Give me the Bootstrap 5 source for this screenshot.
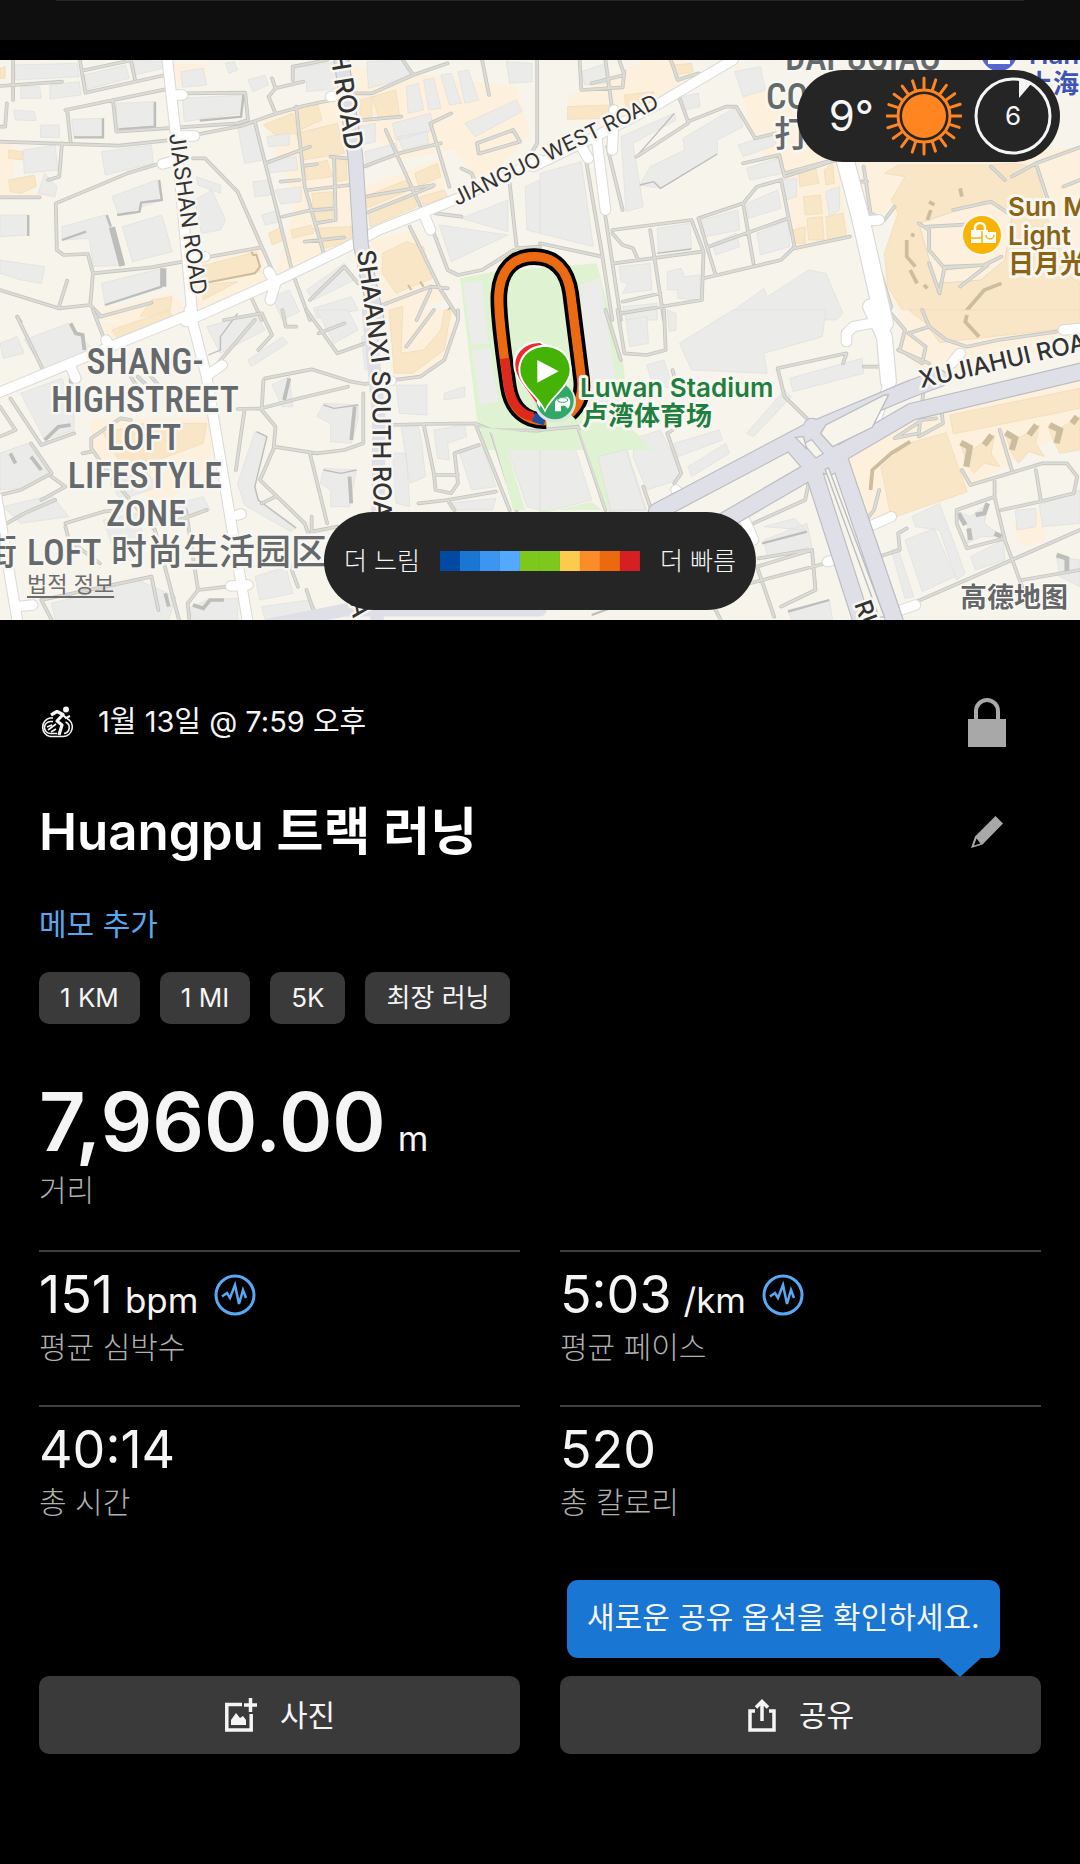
<!DOCTYPE html>
<html lang="ko" data-bs-theme="dark">
<head>
<meta charset="utf-8">
<meta name="viewport" content="width=device-width, initial-scale=1">
<title>Huangpu 트랙 러닝</title>
<link rel="stylesheet" href="https://cdn.jsdelivr.net/npm/bootstrap@5.3.0/dist/css/bootstrap.min.css">
<style>
body{background:#000;color:#f5f5f5;font-family:Inter,"Noto Sans CJK KR",sans-serif;font-size:29px;line-height:40px}
.topbar{height:40px;background:#0f0f0f}
.topbar::before{content:"";display:block;height:1px;margin:0 56px;background:#262626}
.mapbox{margin-top:20px;height:560px}
.mapbox>svg{width:100%;height:100%}
.pill{position:absolute;background:#252525;color:#f5f5f5;border-radius:50px}
.weather{top:10px;right:20px;height:92px;padding:0 8px 0 32px;gap:12px;font-size:42px}
.legend{bottom:10px;left:50%;transform:translateX(-50%);height:98px;padding:0 20px;gap:20px;font-size:25px;white-space:nowrap;font-weight:300}
.scale-bar i{width:20px;height:20px}
.legal{position:absolute;left:27px;bottom:20px;font-size:22px;line-height:32px;color:#6c6c6c;text-decoration:underline;text-underline-offset:4px}
.content{padding:74px 39px 0}
.line-date{height:56px}
.line-title{height:64px;margin-top:50px}
.line-title h1{font-size:51px;font-weight:600;line-height:64px}
.icon-btn{width:70px;height:56px;margin-right:19px;color:#a8a8a8}
.memo{display:inline-block;margin-top:40px;color:#58a8f0;text-decoration:none;font-size:30px}
.chips{margin-top:27px;gap:20px}
.chip{height:52px;padding:0 21px;border:0;border-radius:10px;background:#3a3a3a;color:#f5f5f5;font-size:26px;line-height:50px}
.distance{margin-top:50px;height:96px;font-size:81px;font-weight:600;line-height:96px}
.unit{margin-left:12px;font-size:35px;font-weight:400}
.caption{color:#b0b0b0;font-size:30px;font-weight:300;line-height:40px}
.stats{--bs-gutter-x:40px;margin-top:40px}
.stat{height:155px;border-top:2px solid #404040;padding-top:11px}
.value{height:64px;font-size:52px;line-height:64px}
.pulse{color:#58a8f4;margin-left:16px}
.actions{--bs-gutter-x:40px;margin-top:116px;padding-bottom:110px}
.action{height:78px;border:0;border-radius:10px;background:#3a3a3a;color:#f5f5f5;font-size:30px;gap:22px}
.hint{position:absolute;left:27px;bottom:96px;height:78px;padding:0 20px;border-radius:11px;background:#1976d2;color:#f5f5f5;font-size:30px;line-height:74px;white-space:nowrap}
.hint::after{content:"";position:absolute;right:19px;top:100%;border:21px solid transparent;border-top:19px solid #1976d2;border-bottom:0}
/* map */
.bld{fill:#ebebea;stroke:#dededc;stroke-width:2}
.shd{fill:none;stroke:#bdbdbb;stroke-width:7}
.sand{fill:#fdf1de}.tan{fill:#f9e6c7;stroke:#eddab8;stroke-width:2}.park{fill:#dff3d2}
.tshd{fill:none;stroke:#cdbd9f;stroke-width:11}
.lc,.li,.wc,.wi,.ac,.ai{fill:none;stroke-linejoin:round;stroke-linecap:round}
.lc{stroke:#c6c6c1;stroke-width:11}.li{stroke:#dcdbd5;stroke-width:6}
.wc{stroke:#dadad8;stroke-width:34}.wi{stroke:#fff;stroke-width:28}
.ac{stroke:#bcbdc2;stroke-width:46}.ai{stroke:#dfe0e7;stroke-width:39}
.street{fill:#333;font-family:Inter,sans-serif;stroke:#f8f6f1;stroke-width:5px;paint-order:stroke;stroke-linejoin:round}
.zone{fill:#65696b;font-family:"Roboto Condensed","Liberation Sans Narrow",Roboto,"Noto Sans CJK SC",sans-serif;font-weight:500;font-size:36px;stroke:#f8f6f1;stroke-width:5px;paint-order:stroke;stroke-linejoin:round}
.poi{font-family:Inter,"Noto Sans CJK SC",sans-serif;font-weight:600;font-size:26px;stroke:#f8f6f1;stroke-width:6px;paint-order:stroke;stroke-linejoin:round}
</style>
</head>
<body>
<header class="topbar"></header>
<section class="mapbox position-relative overflow-hidden">
<svg viewBox="0 60 1080 560" preserveAspectRatio="xMidYMid slice" role="img" aria-label="Luwan Stadium">
<defs>
<path id="a-lane" d="M38 180V300M0 258L180 245M232 180L248 278L480 225M238 212L375 182M380 180L392 238M0 425L345 437L480 422L700 378L790 345L880 318L1000 292M190 330L480 268M195 330L205 425M328 300L338 395L480 385L690 370L720 360L712 278L540 280M20 310L15 380L0 380M180 430L172 530L140 540M0 592H115M460 492L370 520L162 610L165 750L185 765L255 762L270 820L262 915L295 950M0 870L170 925L262 915M170 925L195 842M270 820L440 802L760 742M560 475L595 475L690 575L790 810M740 365L850 820L900 960M860 320L885 560L940 760M770 490L900 440M780 290L800 340M780 290L800 265L880 245M850 240L850 200L950 180M800 265L790 235M815 545L870 540M820 650L895 632L975 625M885 497L920 492M895 570L1015 555M970 470L975 660L915 670M960 470L1010 475M885 725L1000 712M1170 180L1200 225L1300 190M1030 280H1080L1200 225M1000 365L1165 350M1060 590L1260 555M1060 640L1255 560M1055 500L1160 460L1280 430M1120 390L1230 640M1250 370L1305 560M1250 370L1310 340M1400 180L1420 285M1390 460L1385 430L1490 390L1510 425L1395 460M1560 180V430L1530 480M1340 505L1370 520L1380 550M1480 550L1500 740M1260 700L1300 810L1330 825L1400 810L1500 745L1568 740M1190 680L1280 870L1330 950M1110 915L1250 860L1300 865M1250 870L1210 960M900 900L1000 800L1040 850M290 950L440 908M50 950L60 965M720 870L760 960M1265 640L1340 650"/>
<path id="a-white" d="M485 170L510 400L560 960M510 285H530M510 408H565M515 480L472 492M545 770H595M780 815L800 850L785 900M1230 640L1250 690M960 290L990 285M540 965L800 845L1000 745L1100 690L1330 595L1568 480"/>
<path id="a-art" d="M990 170L1032 470L1048 735L1095 965"/>
<path id="b-lane" d="M115 180L120 270L240 262L245 215M190 180L210 330M230 180L245 225L150 250M380 180L400 240L460 220M400 280L430 365L540 320L570 320L625 415L685 400M430 370L280 470M590 490L695 465L710 530L860 480M710 520L850 480M130 460L180 760L210 960M195 440L240 630M190 650L235 960M210 690L440 660L475 755L470 900L235 940M320 690L360 960M215 790L470 755M210 700L240 735L270 745L285 780M460 655L590 610L630 560L700 540L740 745L900 710M460 655L510 825M590 610L620 790M490 740L720 655M475 835L700 780L740 740M0 730L180 770M240 905L350 880M940 500L960 640L1000 660M1000 660L1030 620M925 545H950M1370 530L1440 490L1600 430M1440 490L1475 600M1100 670L1130 690L1130 750L1175 805L1290 795L1340 770M1125 680L1300 670M1200 630L1310 605L1360 640M1175 800L1160 880L1130 790M1180 800L1300 795L1220 860M990 820L1020 920L1000 960M1350 540L1310 500M1520 560L1568 540"/>
<path id="b-white" d="M-20 500L150 415L330 320L560 180M165 420L190 630M215 330L210 450M120 440L140 475M955 662L985 660"/>
<path id="b-wide" d="M860 380L930 650L1000 970"/>
<path id="c-lane" d="M50 20L125 180M270 0L300 80M30 265L120 405L215 370M0 290L45 360L0 380M265 385L350 325L380 330M265 385L265 415L330 510L450 660L520 930M265 425L240 430M20 640L70 610L160 570M90 400L150 490L60 540L0 555M380 200L395 225M400 200L430 230M430 190L460 225M650 30L760 10L790 75L750 120M600 200L740 30M820 0L830 50H860M890 0L980 130L1060 100M925 70L1000 40M770 205L905 178L1020 215L1060 222L1125 212M765 210L760 300L800 350L795 410L920 430L1000 420L1055 400V250M690 297L760 295L870 265L1010 230M710 300L685 480M795 415L755 510L885 640L895 670M900 430L950 640M760 580L800 560M905 620V665L980 650M1130 345L1230 342L1380 340L1425 360L1568 362M1230 342L1260 490L1265 540L1310 550L1330 520L1320 430L1390 405M1260 495H1330M1380 340L1480 600M1425 360L1500 600M1215 580L1300 570L1440 545M1300 570L1320 600M1330 0V30L1290 150L1220 200L1130 212M120 870L440 800L460 900M120 870L150 930M190 640L300 605L350 600M190 650L200 690L290 760M540 600L575 840L660 830M575 840L545 880L550 930M600 600L520 630M840 760L865 830M890 840L910 900M150 500L190 530L120 570M1180 110L1260 0"/>
<path id="c-white" d="M-20 255L180 170L320 110L560 10M205 170L220 205M308 90L320 110M550 0L600 200L720 940M610 190L645 165M690 615L700 612M670 828L720 825M-10 560L50 930M50 890L95 885M1110 215L1135 212"/>
<path id="d-lane" d="M225 0L245 130L310 135L365 120L360 0M190 0L235 150M0 360L110 350M110 350L190 600M385 180L390 200M690 175L890 130L880 160M690 175L710 260L775 325M370 370L410 490L390 520M370 370L385 360M300 530L320 590M780 520L770 570L620 640M630 770L790 720L800 840L700 890M635 745L780 720M610 820L830 760M630 770L680 920M500 880L525 930M1010 0L1060 60L1045 120L1110 160L1120 110L1070 70L1130 50L1180 90L1240 110L1330 90L1500 65M940 170H1000M1110 0L1130 50M1040 120L1130 160M1115 230L1100 370L1030 385M1030 385L1110 330L1150 325M1165 290L1170 340L1100 380M1335 360L1370 480M1225 480L1250 525L1460 460L1530 460L1560 500L1550 550L1450 575L1340 600M1320 510V560L1350 690L1400 830M1320 560L1210 600L1210 640L1240 715L1350 685M1440 480L1455 575M985 540L970 600L940 640M1065 655L1040 670L1045 720L970 745M1568 660L1370 750L1060 890M1400 810L1568 780"/>
<path id="d-white" d="M890 95L890 70L910 50L960 40M1195 160L1220 130M395 540L400 545M590 620L620 690M835 755L870 745M945 655L1020 620M1020 910L1090 885M1520 60L1568 55M1010 230L960 370"/>
<path id="d-wide" d="M960 -10L1000 80L1012 215"/>
<path id="d-art" d="M340 605L780 365L1080 235M540 630L790 480L1080 305L1590 180M1080 235L1160 205M740 410L790 470L930 920M790 350L870 450L1030 935M840 470L850 440"/>
<path id="shaanxi" d="M357 251L372 365L374 560"/>
</defs>
<rect y="0" width="1080" height="640" fill="#f7f4ec"/>
<g transform="scale(.34436 .33333)">
<path class="sand" d="M0 430H40V560L160 590H0zM760 360L990 290L1160 260L1170 360L1050 380L1020 740L800 820L860 600zM1060 560L1290 470L1290 590L1080 690zM1080 720L1210 690L1290 900L1110 960H1060zM520 800L760 745L770 840L560 940zM300 930L500 880L560 960H300zM500 190H600V260H520zM900 180L1500 260L1540 400L1400 560L1320 450L1150 480z"/>
<path class="tan" d="M765 375L850 340L870 400L800 405zM862 328L920 305L935 360L870 390zM860 400L980 370L1000 460L880 480zM885 500L950 480L965 530L890 540zM1080 290L1150 270L1160 350L1100 355zM1045 300L1080 290V355H1045zM1060 590L1180 540L1190 570L1065 625zM1070 640L1200 590L1210 620L1075 680zM1205 520L1270 490L1280 530L1215 560zM1110 760L1180 725L1230 740L1255 835L1150 880L1110 820zM580 800L745 755L755 815L590 850zM905 580L965 575V620L910 625zM910 640L965 630V660L915 665zM780 700L820 680L825 720L790 735zM845 690L905 675L910 700L850 715zM0 205L15 200V235H0zM25 450L65 455V480L25 475zM25 540L100 525L105 560L60 580L30 575zM910 685L1020 680V720L945 745zM975 480L1005 478L1008 540L980 545zM1130 940L1165 920V960H1130zM1220 590L1290 570L1300 590L1230 615zM585 855L690 845L590 900zM440 900L500 890L490 950L400 960z"/>
<path class="bld" d="M42 195L225 190L230 230L45 240zM245 225L365 195L375 235L255 268zM60 260H115L120 295H60zM145 255L230 245L235 285L145 297zM390 180L475 185V205L390 225zM525 215L590 205L600 255L530 262zM530 295L705 285L700 340L535 365zM338 310L445 305L447 380L340 385zM208 358L300 355V410L215 412zM40 330L100 335L105 362L45 360zM118 375H172V412H118zM68 450L160 435L168 510L70 520zM295 455L440 435L445 490L305 525zM325 590L455 540L470 600L345 645zM180 680L305 645L360 795L270 800L260 715L180 720zM355 680L470 645L500 755L385 785zM565 600L615 570L655 660L640 690L585 700zM0 645L80 645V705L0 710zM0 780L130 800L120 850L60 840L0 820zM295 850L470 805L475 860L305 915zM690 380L740 370L765 480L710 490zM775 410L840 400V435L780 440zM780 480L860 470L865 510L785 518zM735 545L785 540V585L740 590zM800 570L875 560V605L815 612zM760 645L810 630L815 665L770 675zM850 205L980 185L990 265L890 275V245H850zM1065 185L1170 180L1190 230L1070 265zM1180 260L1215 250L1230 330L1185 340zM1230 240L1260 235L1280 325L1245 330zM1280 225L1310 220L1340 310L1305 315zM1330 215L1360 210L1390 300L1350 310zM1470 185L1545 190V245L1480 250zM1350 370L1500 300L1515 335L1380 410zM1140 370L1250 340L1260 390L1150 420zM1060 455L1150 430L1155 455L1065 505zM1040 380L1090 370V425L1050 435zM1155 410L1240 395L1245 430L1170 450zM1340 655L1475 600V695zM1275 675L1475 705L1310 785zM1525 560L1568 540V700L1530 690zM890 870L1000 790L1030 840L910 900zM910 925L1020 890L1040 930L920 955zM790 890L840 870L870 935L820 960zM655 190L680 185L690 210L665 220zM720 240L770 225L780 255L735 275zM570 530L640 555V580L575 555zM130 520L165 560L160 590L110 580z"/>
<path class="shd" d="M450 305V380L345 388M299 355V412H215M707 285L700 350L580 362M462 540L470 600L410 608L405 635L340 645M310 645L322 680M82 645V708M180 720L250 695M305 915L470 860"/><path class="shd" style="stroke-width:18" d="M325 682L355 798M474 805V860"/>
<path class="tshd" style="stroke-width:6" d="M730 755L735 765H745L755 800L740 820L580 852M1185 855L1195 870M1220 845L1230 860M1290 880L1310 920L1285 950"/>
</g>
<g transform="translate(540) scale(.34436 .33333)">
<path class="sand" d="M80 290L300 180H420L460 240L280 350H80zM560 180L720 320L860 480L700 540L620 420zM720 520L860 480L900 710L740 760zM930 490L1568 440V960H1050L1000 840L1030 640L945 640z"/>
<path class="tan" d="M80 320L205 315V355L80 358zM245 285L330 275V320L250 325zM750 515L800 500L810 550L755 560zM765 590L815 585L820 640L770 645zM775 655L820 650L825 720L780 720zM735 690L770 680V730H740zM830 650L880 640L890 710L835 720zM825 510L850 490L855 550L830 555zM1000 520L1060 530L1020 600L1040 640L1000 760L1010 860L1070 960H1568V850L1480 680L1440 500L1370 490L1300 495L1040 495zM390 195L440 190L445 215L395 225z"/>
<path class="sand" d="M1100 670L1300 600L1370 650L1350 780L1280 840L1150 850L1125 760z" stroke="#e0d2b8" stroke-width="2"/>
<path class="bld" d="M0 520L120 485L155 740L0 700zM235 410L390 340L395 360L270 430L300 620L250 635zM290 555L320 500L420 450L415 415L570 320L590 380L515 420V460L350 565zM575 435L680 400L685 435L590 470zM600 505L690 475L705 520L610 540zM565 215L640 200L655 270L590 290zM410 290L460 280L465 320L420 330zM120 215L190 190L195 250L130 255zM470 660L575 630L580 690L480 710zM500 730L570 700L580 740L510 765zM600 610L690 570L700 625L605 655zM630 700L720 660L725 740L640 765zM340 685L435 670L440 745L345 758zM230 800L320 790L325 870L240 880L255 850L235 845zM370 815L410 805L420 830L465 825V900L400 895V870H370zM525 960L650 865L660 890L780 810L830 820L880 940L860 960zM110 860L160 840L210 960H120zM700 540L745 535V590L715 600zM830 575L870 560V630L840 650zM240 920L340 910V960H250z"/>
<path class="tshd" d="M1220 565L1225 590M1130 605L1145 615M1125 660L1135 630M1085 700L1080 710M1065 720V770L1090 800M1075 810L1095 850M1115 855L1125 865M1340 850L1290 870L1240 930L1230 960"/>
<path class="shd" style="stroke-width:4" d="M290 555L330 545L350 565L515 462M280 470L390 340M340 760L440 747"/>
</g>
<g transform="translate(0 310) scale(.34436 .33333)">
<path class="sand" d="M295 40L550 0L540 20L330 110zM260 330L640 320L600 480L480 580L430 560L280 470zM1110 0H1320L1300 150L1210 200H1140zM370 600L430 590L450 660z"/>
<path class="tan" d="M325 60L490 0L500 20L350 100zM1130 0L1170 -10L1165 130L1230 120L1280 60L1290 0H1310L1290 120L1200 190H1145zM300 370L420 340L600 340L590 400L460 450L350 460z"/>
<path class="bld" d="M70 90L200 40L270 120L240 150L130 180zM0 100L50 80L70 130L10 145zM60 250L180 205L215 300V360L130 390zM0 430L80 400L145 490L60 535L0 540zM10 590L150 555L200 620L60 640zM600 50L740 10L770 60L640 130zM720 150L820 80L835 100L730 170zM920 0L1010 0L1040 60L970 100zM1050 80L1100 50V160L1060 180zM790 225L840 200L850 290L820 290zM940 280L1040 285V330L1020 400L960 395V340L920 320zM740 365L775 380L740 530L750 570L860 650L845 665L710 585L690 520zM940 475L1035 480L1015 590L960 590V540L930 520zM1150 225H1240V315L1160 310zM1165 350H1215L1225 400L1235 500L1190 520zM1140 430L1180 430L1190 590L1150 580zM1260 360L1350 345L1355 380L1300 400L1305 450L1270 445zM1335 430L1400 405L1440 530L1370 540zM1470 405L1568 370V600L1530 590zM320 520L420 480L460 530L350 570zM480 590L590 560L610 600L500 640zM300 630L400 610L420 700L330 720zM150 880L400 810L510 860L490 930H160zM740 800L830 770L850 850L755 870zM550 895L600 870L690 865V930H560zM410 590L450 580L480 640L430 650zM270 470L320 460L360 490L330 510zM1290 250L1350 230V260L1290 270zM1300 580L1440 565L1430 600H1310zM760 890L900 870L940 930H770z"/>
<path class="shd" style="stroke-width:11" d="M205 40L220 70L240 75L245 120M205 205L210 310M130 390L170 350L205 345M840 205L825 270M1030 290L1020 390M1015 500L1020 580M30 430L45 460M90 440L120 480M480 850L490 890M560 885L590 895L610 870H650"/>
<path class="shd" style="stroke-width:4" d="M690 10L640 80L640 120L605 135M745 365L775 380L740 530L750 570L860 655M940 285L970 295L1040 285M940 480L990 490L1035 480"/>
</g>
<g transform="translate(540 310) scale(.34436 .33333)">
<path class="sand" d="M1040 0H1568V90L1130 220L1050 120zM880 445L1080 330L1568 200V350L1400 440L1250 530L1240 550L1010 630L930 640zM1370 640L1450 600L1470 690L1400 710z"/>
<path class="tan" d="M1070 0H1568V50L1160 98L1120 40zM1190 315L1568 235V295L1200 372zM990 470L1070 400L1180 368L1240 545L1020 625zM1220 400L1260 415L1320 375L1310 430L1335 470L1290 460L1260 490L1240 460zM1350 370L1390 385L1450 345L1440 400L1465 440L1420 425L1390 460L1370 430zM1475 345L1510 355L1568 320V420L1510 430L1490 390z"/>
<path class="bld" d="M250 30L310 20L315 100L260 110zM370 0L395 10V60L375 65zM405 100L560 0H830L820 80L650 130L660 190L440 180zM725 205L935 145L940 190L735 245zM600 370L710 240L730 260L620 380zM310 165L360 150L385 230L330 235zM275 385L350 360L410 490L400 510L310 540L270 440zM0 370L85 360L150 570L0 610zM165 440L250 415L310 600L200 605zM430 470L540 400L550 430L440 500zM650 690L775 640L790 710L660 740zM720 900L840 870L850 930H730zM1060 690L1145 655L1205 800L1110 845zM1080 620L1160 580L1235 790L1210 810L1160 660L1090 650zM1215 605L1250 620L1300 580L1290 640L1345 680L1280 680L1240 700L1245 655zM1380 600L1440 595V650L1385 660zM1450 585L1568 540V640L1460 650zM1250 740L1345 690L1350 750L1265 780zM1500 740L1568 750V830L1510 800zM1020 720L1040 715L1085 860L1060 865zM390 400L520 360L530 390L400 440zM650 650L740 625L770 660z"/>
<path class="tshd" d="M1240 15L1235 35L1275 80M960 540L965 480L1020 430L1075 395"/><path class="tshd" style="stroke-width:18" d="M1222 398L1248 412L1238 470M1312 375L1290 405M1352 368L1380 385L1370 420M1442 345L1420 375M1480 345L1510 360L1500 400M1560 320L1545 340"/>
<path class="shd" d="M645 700L775 665M720 905L840 870M150 915L230 885"/><path class="shd" style="stroke-width:14" d="M1215 610L1235 645M1300 580L1290 610L1265 615M1245 655L1250 690M1500 735L1530 745V790M1320 670L1340 680"/>
</g>
<g transform="translate(440 230) scale(.33333)">
<path class="park" d="M60 145L160 125L470 100L550 400L570 590L640 660H130L110 560z"/>
<path fill="#ecedea" d="M70 160L125 150L145 340L95 345zM95 360L150 355L175 515L120 525zM420 165L480 145L545 560L440 570z"/>
</g>
<g transform="scale(.34436 .33333)"><use href="#a-lane" class="lc"/><use href="#a-lane" class="li"/></g>
<g transform="translate(540) scale(.34436 .33333)"><use href="#b-lane" class="lc"/><use href="#b-lane" class="li"/></g>
<g transform="translate(0 310) scale(.34436 .33333)"><use href="#c-lane" class="lc"/><use href="#c-lane" class="li"/><path class="park" d="M1385 350L1568 372V385L1470 410L1525 600H1490L1430 370z"/></g>
<g transform="translate(540 310) scale(.34436 .33333)"><use href="#d-lane" class="lc"/><use href="#d-lane" class="li"/><path class="park" d="M115 360L250 400L300 600H195zM0 612L150 575L180 600H0z"/><path class="bld" d="M168 440L250 418L305 600H205z"/></g>
<g transform="scale(.34436 .33333)"><use href="#a-white" class="wc"/></g>
<g transform="translate(540) scale(.34436 .33333)"><use href="#b-white" class="wc"/><use href="#b-wide" class="wc" style="stroke-width:56"/></g>
<g transform="translate(0 310) scale(.34436 .33333)"><use href="#c-white" class="wc"/></g>
<g transform="translate(540 310) scale(.34436 .33333)"><use href="#d-white" class="wc"/><use href="#d-wide" class="wc" style="stroke-width:50"/></g>
<g transform="scale(.34436 .33333)"><use href="#a-white" class="wi"/><use href="#a-art" class="ac"/><use href="#a-art" class="ai" style="stroke-width:40"/></g>
<g transform="translate(540) scale(.34436 .33333)"><use href="#b-white" class="wi"/><use href="#b-wide" class="wi" style="stroke-width:49"/></g>
<g transform="translate(0 310) scale(.34436 .33333)"><use href="#c-white" class="wi"/><path class="ai" d="M1070 0L1100 320L1095 930"/><path class="ai" d="M780 945L1000 900L1568 900"/></g>
<g transform="translate(540 310) scale(.34436 .33333)"><use href="#d-white" class="wi"/><use href="#d-wide" class="wi" style="stroke-width:43"/><use href="#d-art" class="ac" style="stroke-width:54"/><use href="#d-art" class="ai" style="stroke-width:47"/><path fill="#f7f4ec" stroke="#bcbdc2" stroke-width="4" d="M742 382L765 380L775 418zM828 478L838 474L1000 920L985 922zM815 370L830 345L1000 255H1012L965 352L850 410z"/></g>
<g class="street">
<text font-size="26" font-weight="500" transform="translate(330 53) rotate(81)">H ROAD</text>
<text font-size="25" font-weight="500"><textPath href="#shaanxi">SHAANXI SOUTH ROAD</textPath></text>
<text font-size="22" transform="translate(169 134) rotate(82)">JIASHAN ROAD</text>
<text font-size="21" transform="translate(457 206) rotate(-26)">JIANGUO WEST ROAD</text>
<text font-size="24" font-weight="500" transform="translate(921 388) rotate(-13)">XUJIAHUI ROAD</text>
<text font-size="24" font-weight="500" transform="translate(854 604) rotate(70)">RU</text>
<text font-size="24" font-weight="500" transform="translate(350 602) rotate(80)">A</text>
</g>
<g class="zone" text-anchor="middle">
<text x="145" y="374">SHANG-</text><text x="145" y="412">HIGHSTREET</text><text x="144" y="450">LOFT</text><text x="145" y="488">LIFESTYLE</text><text x="146" y="526">ZONE</text>
<g text-anchor="start"><text x="-19" y="565">街</text><text x="27" y="565">LOFT</text><text x="111" y="565">时尚生活园区</text></g>
<text x="863" y="70">DAPUQIAO</text><text x="766" y="109" text-anchor="start">CO</text><text x="774" y="147" text-anchor="start">打</text>
</g>
<g class="poi">
<circle cx="999" cy="53" r="18" fill="#5566cc" stroke="none"/><path d="M988 60h22v4h-22zM991 50h3v9h-3zM998 50h3v9h-3zM1005 50h3v9h-3z" fill="#fff" stroke="none"/>
<g fill="#3f55b5"><text x="1029" y="64">Han</text><text x="1027" y="93">上海田</text></g>
<circle cx="982" cy="235" r="21" fill="#faf7f2" stroke="none"/><circle cx="982" cy="235" r="19" fill="#f8b400" stroke="none"/>
<g stroke="none"><path d="M971 230h17v13h-17zM983 232h13v11h-13z" fill="#fff"/><path d="M975 230v-2a5 5 0 0 1 10 0v2" fill="none" stroke="#fff" stroke-width="2.4"/><path d="M971 238h11M982 231v12M986 235a4 4 0 0 0 8 0" fill="none" stroke="#f8b400" stroke-width="1.5"/></g>
<g fill="#8a6412"><text x="1008" y="216">Sun M</text><text x="1008" y="245">Light</text><text x="1008" y="273">日月光</text></g>
</g>
<!-- recorded route -->
<g transform="translate(440 230) scale(.33333)" fill="none">
<path d="M318 572C260 575 215 540 205 470C195 400 172 250 177 190C182 120 220 80 282 80C345 80 382 120 392 190C398 240 415 370 425 450C430 500 412 530 390 550" stroke="#000" stroke-width="50"/>
<path d="M318 572C260 575 215 540 205 470C195 400 172 250 177 190C182 120 220 80 282 80C345 80 382 120 392 190C398 240 415 370 425 450C430 500 412 530 390 550" stroke="#ec6b12" stroke-width="28"/>
<path d="M280 560C240 555 215 520 205 470L194 385" stroke="#dd2a1c" stroke-width="28"/><path d="M280 562L315 572" stroke="#1f4f9f" stroke-width="28"/>
<circle cx="345" cy="515" r="63" fill="#dfe5e3"/><circle cx="345" cy="512" r="56" fill="#32a866"/>
<path d="M345 520q0-20 38-20q14 12 4 32l-4 4q-8-14-20-8v16h-18z" fill="#fff"/><ellipse cx="368" cy="510" rx="15" ry="7" stroke="#32a866" stroke-width="3"/>
<path d="M300 534C275 490 220 450 220 405C220 360 250 335 300 333L330 350z" fill="#fff"/>
<path d="M290 520C265 480 226 445 226 405C226 368 255 340 300 339L315 350z" fill="#f0282f"/>
<path d="M315 548C295 500 235 470 235 420C235 375 270 344 315 344C360 344 395 375 395 420C395 470 335 500 315 548z" fill="#fff"/>
<path d="M315 539C300 500 241 465 241 420C241 380 273 351 315 351C357 351 389 380 389 420C389 465 330 500 315 539z" fill="#45b305"/>
<path d="M292 390L356 424L292 458z" fill="#fff"/>
</g>
<g class="poi" fill="#1f7f3f"><text x="580" y="397">Luwan Stadium</text><text x="582" y="425">卢湾体育场</text></g>
<text x="960" y="607" font-family="Noto Sans CJK SC,sans-serif" font-weight="700" font-size="27" fill="#666" stroke="#fff" stroke-width="2" paint-order="stroke">高德地图</text>
</svg>
<div class="pill weather d-flex align-items-center">
<span>9°</span>
<svg width="76" height="80" viewBox="-38 -40 76 80" fill="none" stroke="#ff8520" stroke-width="3" stroke-linecap="round"><circle r="22" fill="#ff8520" stroke="none"/><circle r="26"/><path id="ray" d="M0-27V-38M0 27V38M-27 0H-37M27 0H37"/><use href="#ray" transform="rotate(18)"/><use href="#ray" transform="rotate(36)"/><use href="#ray" transform="rotate(54)"/><use href="#ray" transform="rotate(72)"/></svg>
<svg width="78" height="80" viewBox="-39 -40 78 80"><circle r="37" fill="none" stroke="#f5f5f5" stroke-width="3"/><path d="M6-37L18-32L6-18z" fill="#f5f5f5"/><text y="9" text-anchor="middle" font-size="26" fill="#f5f5f5">6</text></svg>
</div>
<div class="pill legend d-flex align-items-center">
<span>더 느림</span>
<span class="scale-bar d-flex"><i style="background:#004aa3"></i><i style="background:#1976d2"></i><i style="background:#3d95f2"></i><i style="background:#54a8ff"></i><i style="background:#7ec81d"></i><i style="background:#7ec81d"></i><i style="background:#ffcb4f"></i><i style="background:#fc8c28"></i><i style="background:#ec6a0e"></i><i style="background:#d61f22"></i></span>
<span>더 빠름</span>
</div>
<a class="legal" href="#">법적 정보</a>
</section>
<main class="content">
<div class="line-date d-flex align-items-center">
<svg width="35" height="32" viewBox="0 0 35 32" fill="none" stroke="#f5f5f5" stroke-width="1.6"><path d="M14 12H11a9.500 9.500 0 0 0 0 18.500H24a9.500 9.500 0 0 0 4-18"/><path d="M14 15.500H11.500a6 6 0 0 0 0 12H18M25 27.500a6 6 0 0 0 1.500-11.500"/><path d="M9 24L17 18M8 21l5-2M12 26l5-3"/><path d="M12 9L18 5.500L24 8.500L18 15L23 19L20 29" stroke-width="3.200" stroke-linejoin="round"/><path d="M24 9L27 12L31 10" stroke-width="2"/><circle cx="27" cy="3.500" r="3" fill="#f5f5f5" stroke="none"/></svg>
<time class="ms-4">1월 13일 @ 7:59 오후</time>
<button class="btn icon-btn ms-auto p-0" type="button" aria-label="공개 설정"><svg width="40" height="50" viewBox="0 0 40 50"><path d="M9 24V14a11 11 0 0 1 22 0v10" fill="none" stroke="currentColor" stroke-width="4"/><path d="M1 22h38v28H1z" fill="currentColor"/></svg></button>
</div>
<div class="line-title d-flex align-items-center">
<h1 class="m-0">Huangpu 트랙 러닝</h1>
<button class="btn icon-btn ms-auto p-0" type="button" aria-label="제목 편집"><svg width="34" height="34" viewBox="0 0 34 34"><path d="M25.500 1L33 8.500L12.500 29.500L1 33L5 21.500zM6.500 23.500L4 30.500L10.500 28.500z" fill="currentColor" fill-rule="evenodd"/></svg></button>
</div>
<a class="memo" href="#">메모 추가</a>
<div class="chips d-flex flex-wrap">
<button class="chip" type="button">1 KM</button><button class="chip" type="button">1 MI</button><button class="chip" type="button">5K</button><button class="chip" type="button">최장 러닝</button>
</div>
<div class="distance d-flex align-items-baseline">7,960.00<span class="unit">m</span></div>
<div class="caption">거리</div>
<div class="row stats">
<div class="col-6"><div class="stat"><div class="value d-flex align-items-baseline">151<span class="unit">bpm</span><svg class="pulse align-self-center" width="42" height="42" viewBox="0 0 42 42" fill="none" stroke="currentColor"><circle cx="21" cy="21" r="19" stroke-width="3"/><path d="M8 22.500L13 19L16 24L21 11L25 30L29 16L32 24" stroke-width="2.500"/></svg></div><div class="caption">평균 심박수</div></div></div>
<div class="col-6"><div class="stat"><div class="value d-flex align-items-baseline">5:03<span class="unit">/km</span><svg class="pulse align-self-center" width="42" height="42" viewBox="0 0 42 42" fill="none" stroke="currentColor"><circle cx="21" cy="21" r="19" stroke-width="3"/><path d="M8 22.500L13 19L16 24L21 11L25 30L29 16L32 24" stroke-width="2.500"/></svg></div><div class="caption">평균 페이스</div></div></div>
<div class="col-6"><div class="stat"><div class="value">40:14</div><div class="caption">총 시간</div></div></div>
<div class="col-6"><div class="stat"><div class="value">520</div><div class="caption">총 칼로리</div></div></div>
</div>
<div class="row actions">
<div class="col-6"><button class="action w-100 d-flex align-items-center justify-content-center" type="button"><svg width="34" height="36" viewBox="0 0 34 36" fill="none" stroke="#f5f5f5" stroke-width="3.500"><path d="M18 7.500H2.800V33H27.200V17M26.500 1V15M20 8H33"/><path d="M7 28V23L12 16L16 21L19 19L22 23V28z" fill="#f5f5f5" stroke="none"/></svg>사진</button></div>
<div class="col-6 position-relative"><div class="hint" role="tooltip">새로운 공유 옵션을 확인하세요.</div><button class="action w-100 d-flex align-items-center justify-content-center" type="button"><svg width="30" height="36" viewBox="0 0 30 36" fill="none" stroke="#f5f5f5" stroke-width="3.500"><path d="M8 14H3V33H27V14H22M15 24V5M9 10.500L15 4.500L21 10.500"/></svg>공유</button></div>
</div>
</main>
<script src="https://cdn.jsdelivr.net/npm/bootstrap@5.3.0/dist/js/bootstrap.bundle.min.js"></script>
</body>
</html>
